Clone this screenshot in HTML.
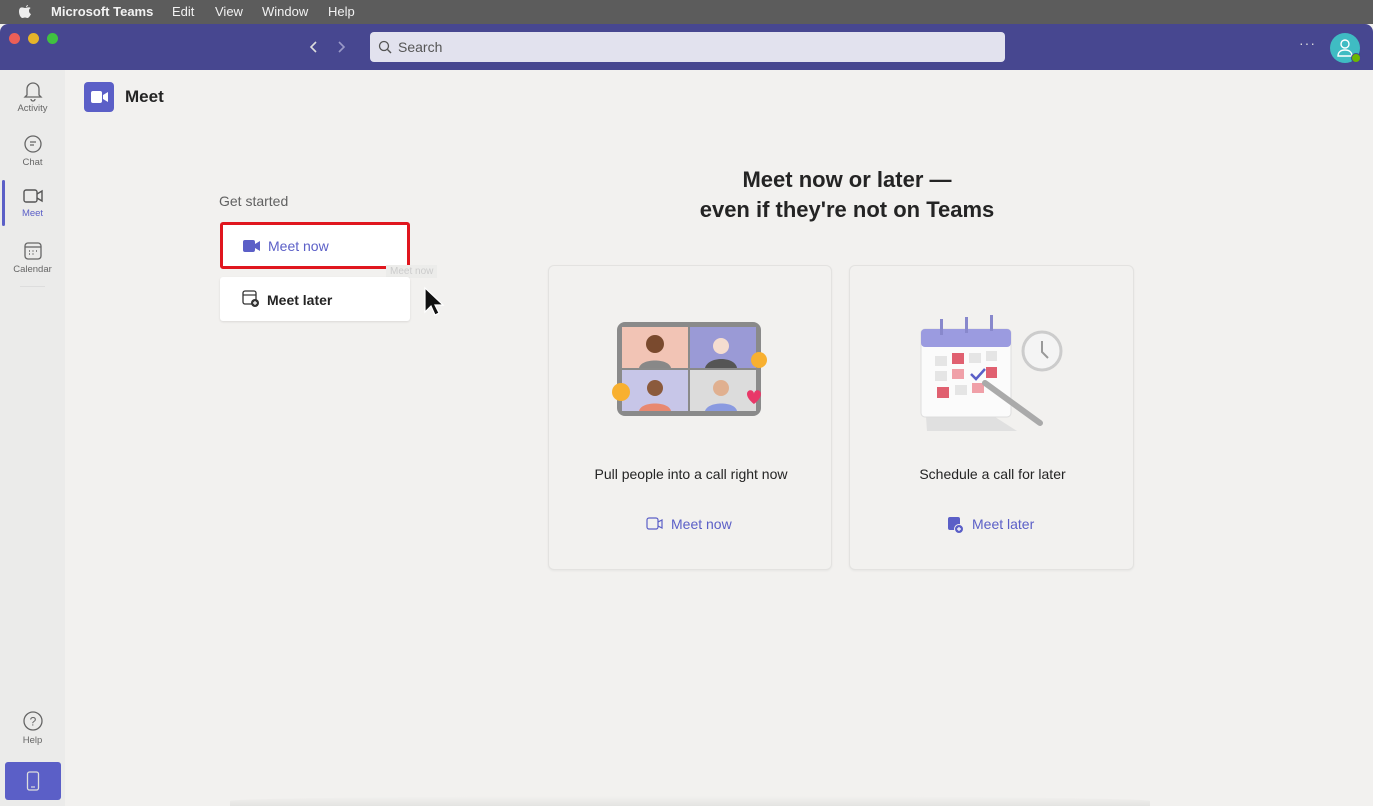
<!DOCTYPE html>
<html><head><meta charset="utf-8"><style>
*{margin:0;padding:0;box-sizing:border-box}
body{width:1373px;height:806px;overflow:hidden;background:#f2f1ef;font-family:"Liberation Sans",sans-serif;position:relative}
.a{position:absolute}
.menu{left:0;top:0;width:1373px;height:24px;background:#5c5c5c;color:#f2f2f2;font-size:13px}
.menu span{position:absolute;top:4px}
.title{left:0;top:24px;width:1373px;height:46px;background:#474790;border-radius:8px 8px 0 0}
.side{left:0;top:70px;width:65px;height:736px;background:#ebebea}
.nav{position:absolute;left:0;width:65px;text-align:center;font-size:9.5px;color:#666}
.card{background:#f2f1ef;border:1px solid #e3e2e0;border-radius:6px;box-shadow:0 1px 2px rgba(0,0,0,.05)}
</style></head><body>
<div class="a menu">
 <svg class="a" style="left:18px;top:3px" width="14" height="17" viewBox="0 0 14 17"><path d="M10 2c-1 0-2 1-2 2 1 0 2-1 2-2zM7 5c-1 0-2-.6-3-.6C2 4.4 1 6 1 8.5 1 12 3 15 4.5 15c1 0 1.3-.5 2.5-.5s1.4.5 2.5.5C11 15 12.5 12 13 11c-1.5-.6-2-2-2-3.3 0-1.3.8-2.2 1.6-2.7C11.8 4 10.8 4.4 10 4.4 9 4.4 8 5 7 5z" fill="#eee"/></svg>
 <span style="left:51px;font-weight:bold">Microsoft Teams</span>
 <span style="left:172px">Edit</span><span style="left:215px">View</span><span style="left:262px">Window</span><span style="left:328px">Help</span>
</div>
<div class="a title">
 <div class="a" style="left:9px;top:9px;width:11px;height:11px;border-radius:50%;background:#ec5f57"></div>
 <div class="a" style="left:28px;top:9px;width:11px;height:11px;border-radius:50%;background:#e6b42a"></div>
 <div class="a" style="left:47px;top:9px;width:11px;height:11px;border-radius:50%;background:#40c140"></div>
 <svg class="a" style="left:306px;top:16px" width="40" height="14"><path d="M10 2 5 7l5 5" stroke="#ddd" stroke-width="1.6" fill="none"/><path d="M33 2l5 5-5 5" stroke="#9a9ac8" stroke-width="1.6" fill="none"/></svg>
 <div class="a" style="left:370px;top:8px;width:635px;height:30px;background:#e2e2ee;border-radius:4px">
  <svg class="a" style="left:8px;top:8px" width="14" height="14"><circle cx="6" cy="6" r="4.5" stroke="#555" stroke-width="1.3" fill="none"/><path d="M9.5 9.5 13 13" stroke="#555" stroke-width="1.4"/></svg>
  <span class="a" style="left:28px;top:7px;font-size:14px;color:#555">Search</span>
 </div>
 <span class="a" style="left:1299px;top:11px;color:#ddd;font-size:14px;letter-spacing:1px">···</span>
 <div class="a" style="left:1330px;top:9px;width:30px;height:30px;border-radius:50%;background:#3fbcc3">
  <svg class="a" style="left:7px;top:5px" width="16" height="20"><circle cx="8" cy="6" r="4" stroke="#fff" stroke-width="1.4" fill="none"/><path d="M1 18c0-4 3-6 7-6s7 2 7 6z" stroke="#fff" stroke-width="1.4" fill="none"/></svg>
  <div class="a" style="left:21px;top:20px;width:10px;height:10px;border-radius:50%;background:#6bb700;border:1.5px solid #474790"></div>
 </div>
</div>
<div class="a side">
 <div class="nav" style="top:10px"><svg width="20" height="22" viewBox="0 0 20 22"><path d="M4 15V9a6 6 0 0 1 12 0v6l2 2H2z M8 19a2 2 0 0 0 4 0" stroke="#666" stroke-width="1.3" fill="none"/></svg><div style="margin-top:-2px">Activity</div></div>
 <div class="nav" style="top:64px"><svg width="20" height="20"><circle cx="10" cy="10" r="8" stroke="#666" stroke-width="1.3" fill="none"/><path d="M7 8h6M7 11h4" stroke="#666" stroke-width="1.2"/></svg><div>Chat</div></div>
 <div class="a" style="left:2px;top:110px;width:3px;height:46px;background:#5b5fc7;border-radius:2px"></div>
 <div class="nav" style="top:117px;color:#5b5fc7"><svg width="22" height="18"><rect x="2" y="3" width="13" height="12" rx="2" stroke="#555" stroke-width="1.4" fill="none"/><path d="M15 7l5-3v10l-5-3" stroke="#555" stroke-width="1.4" fill="none"/></svg><div>Meet</div></div>
 <div class="nav" style="top:171px"><svg width="20" height="20"><rect x="2" y="2" width="16" height="16" rx="3" stroke="#666" stroke-width="1.3" fill="none"/><path d="M2 6h16" stroke="#666" stroke-width="1.3"/><path d="M6 10h1M9.5 10h1M13 10h1M6 13h1M9.5 13h1" stroke="#666" stroke-width="1.4"/></svg><div>Calendar</div></div>
 <div class="a" style="left:20px;top:216px;width:25px;height:1px;background:#ddd"></div>
 <div class="nav" style="top:640px"><svg width="22" height="22"><circle cx="11" cy="11" r="9" stroke="#666" stroke-width="1.3" fill="none"/><text x="11" y="15.5" font-size="12" text-anchor="middle" fill="#666" font-family="Liberation Sans">?</text></svg><div>Help</div></div>
 <div class="a" style="left:5px;top:692px;width:56px;height:38px;background:#5b5fc7;border-radius:3px"><svg class="a" style="left:21px;top:9px" width="14" height="21"><rect x="1.5" y="1" width="11" height="18" rx="2" stroke="#ddd" stroke-width="1.3" fill="none"/><path d="M5 16h4" stroke="#ddd" stroke-width="1.2"/></svg></div>
</div>
<div class="a" style="left:84px;top:82px;width:30px;height:30px;background:#5b5fc7;border-radius:4px"><svg class="a" style="left:6px;top:8px" width="19" height="14"><rect x="1" y="1" width="11" height="12" rx="2" fill="#fff"/><path d="M13 5l5-3v10l-5-3z" fill="#fff"/></svg></div>
<div class="a" style="left:125px;top:87px;font-size:17px;font-weight:bold;color:#242424">Meet</div>
<div class="a" style="left:219px;top:193px;font-size:14px;color:#616161">Get started</div>
<div class="a" style="left:220px;top:222px;width:190px;height:47px;background:#fff;border:3px solid #e0161e;border-radius:3px">
 <svg class="a" style="left:20px;top:15px" width="18" height="12"><rect x="0" y="0" width="12" height="12" rx="2" fill="#5b5fc7"/><path d="M12 4l5-3v10l-5-3z" fill="#5b5fc7"/></svg>
 <span class="a" style="left:45px;top:13px;font-size:14px;color:#5b5fc7">Meet now</span>
</div>
<div class="a" style="left:386px;top:265px;font-size:10px;color:#ccc;background:#ececea;padding:1px 4px">Meet now</div>
<div class="a" style="left:220px;top:277px;width:190px;height:44px;background:#fff;border-radius:3px;box-shadow:0 1px 2px rgba(0,0,0,.1)">
 <svg class="a" style="left:22px;top:13px" width="18" height="18"><rect x="1" y="1" width="13" height="13" rx="2" stroke="#333" stroke-width="1.3" fill="none"/><path d="M1 5h13" stroke="#333" stroke-width="1.2"/><circle cx="13" cy="13" r="4" fill="#333"/><path d="M13 11v4M11 13h4" stroke="#fff" stroke-width="1.2"/></svg>
 <span class="a" style="left:47px;top:15px;font-size:14px;color:#242424;font-weight:bold">Meet later</span>
</div>
<svg class="a" style="left:423px;top:286px" width="26" height="32"><path d="M2 2v24l6-6 4 9 4-2-4-8h8z" fill="#111" stroke="#fff" stroke-width="1.2"/></svg>
<div class="a" style="left:548px;top:165px;width:598px;text-align:center;font-size:22px;font-weight:bold;color:#242424;line-height:30px">Meet now or later —<br>even if they're not on Teams</div>
<div class="a card" style="left:548px;top:265px;width:284px;height:305px">
 <svg class="a" style="left:60px;top:54px" width="165" height="100">
  <rect x="8" y="2" width="144" height="94" rx="8" fill="#8a8a8a"/>
  <rect x="13" y="7" width="66" height="41" fill="#f2c4b5"/><rect x="81" y="7" width="66" height="41" fill="#9a9ad6"/>
  <rect x="13" y="50" width="66" height="41" fill="#c7c6e8"/><rect x="81" y="50" width="66" height="41" fill="#dcdcdc"/>
  <circle cx="46" cy="24" r="9" fill="#7a4a2e"/><path d="M30 48c2-10 30-10 32 0z" fill="#888"/>
  <circle cx="112" cy="26" r="8" fill="#f5ddd0"/><path d="M96 48c3-12 30-12 32 0z" fill="#555"/>
  <circle cx="46" cy="68" r="8" fill="#8b5a3c"/><path d="M30 91c2-10 30-10 32 0z" fill="#e88870"/>
  <circle cx="112" cy="68" r="8" fill="#e0b090"/><path d="M96 91c3-10 30-10 32 0z" fill="#8a9ae0"/>
  <circle cx="150" cy="40" r="8" fill="#f8b030"/><circle cx="12" cy="72" r="9" fill="#f8b030"/>
  <path d="M138 74c0-5 7-5 7 0 0-5 7-5 7 0 0 5-7 10-7 10s-7-5-7-10z" fill="#e83868"/>
 </svg>
 <div class="a" style="left:0;top:200px;width:284px;text-align:center;font-size:14px;color:#242424">Pull people into a call right now</div>
 <svg class="a" style="left:97px;top:251px" width="18" height="14"><rect x="1" y="1" width="11" height="11" rx="2" stroke="#5b5fc7" stroke-width="1.2" fill="none"/><path d="M12 5l4-2v8l-4-2" stroke="#5b5fc7" stroke-width="1.2" fill="none"/></svg>
 <div class="a" style="left:122px;top:250px;font-size:14px;color:#5b5fc7">Meet now</div>
</div>
<div class="a card" style="left:849px;top:265px;width:285px;height:305px">
 <svg class="a" style="left:65px;top:45px" width="160" height="120">
  <path d="M8 60l4 60h90z" fill="#e0e0e0"/>
  <rect x="6" y="18" width="90" height="88" rx="4" fill="#fbfbfb" stroke="#ddd"/>
  <rect x="6" y="18" width="90" height="18" rx="4" fill="#9b9be0"/>
  <rect x="25" y="8" width="3" height="16" fill="#8888cc"/><rect x="50" y="6" width="3" height="16" fill="#8888cc"/><rect x="75" y="4" width="3" height="16" fill="#8888cc"/>
  <rect x="20" y="45" width="12" height="10" fill="#e5e5e5"/><rect x="37" y="42" width="12" height="11" fill="#e06070"/><rect x="54" y="42" width="12" height="10" fill="#e5e5e5"/><rect x="71" y="40" width="11" height="10" fill="#e5e5e5"/>
  <rect x="20" y="60" width="12" height="10" fill="#e5e5e5"/><rect x="37" y="58" width="12" height="10" fill="#f0a0a8"/><rect x="71" y="56" width="11" height="11" fill="#e06070"/>
  <rect x="22" y="76" width="12" height="11" fill="#e06070"/><rect x="40" y="74" width="12" height="10" fill="#e5e5e5"/><rect x="57" y="72" width="12" height="10" fill="#f0a0a8"/>
  <path d="M56 63l5 5 9-10" stroke="#5b5fc7" stroke-width="2.5" fill="none"/>
  <circle cx="127" cy="40" r="19" fill="#f4f4f4" stroke="#ccc" stroke-width="3"/><path d="M127 30v11l6 6" stroke="#999" stroke-width="2" fill="none"/>
  <path d="M70 72l55 40" stroke="#aaa" stroke-width="6" stroke-linecap="round"/>
 </svg>
 <div class="a" style="left:0;top:200px;width:285px;text-align:center;font-size:14px;color:#242424">Schedule a call for later</div>
 <svg class="a" style="left:97px;top:250px" width="18" height="18"><rect x="1" y="1" width="12" height="13" rx="2" fill="#5b5fc7"/><circle cx="12" cy="13" r="4.5" fill="#5b5fc7" stroke="#f2f1ef" stroke-width="1"/><path d="M12 11v4M10 13h4" stroke="#fff" stroke-width="1.2"/></svg>
 <div class="a" style="left:122px;top:250px;font-size:14px;color:#5b5fc7">Meet later</div>
</div>
<div class="a" style="left:230px;top:796px;width:920px;height:10px;background:linear-gradient(#f2f1ef,#e4e4e2);border-radius:50% 50% 0 0"></div>
</body></html>
